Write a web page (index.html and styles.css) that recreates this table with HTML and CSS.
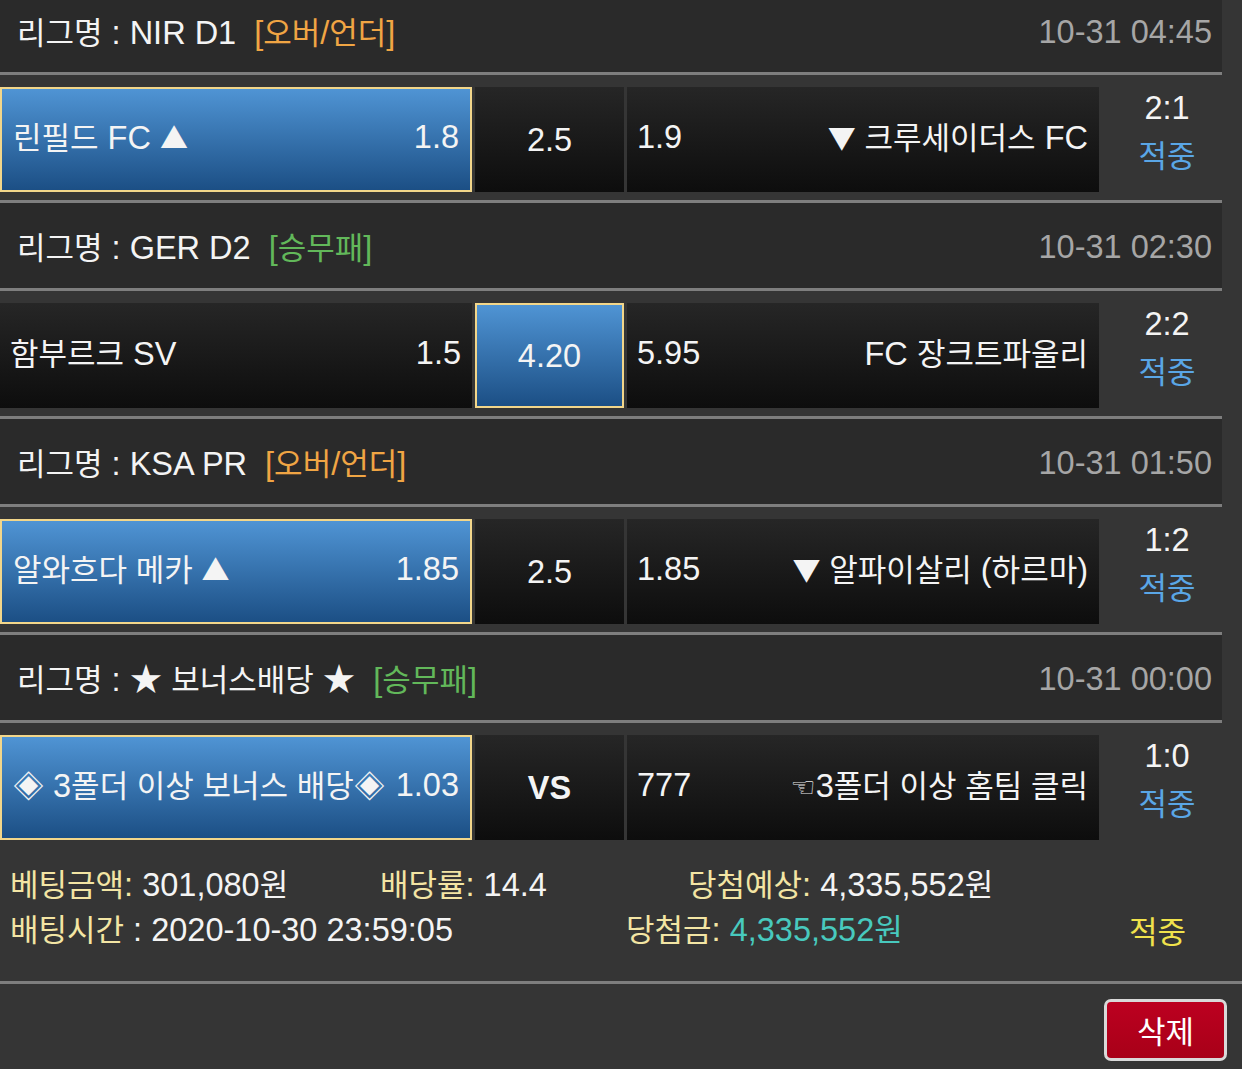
FILE: index.html
```html
<!DOCTYPE html>
<html lang="ko">
<head>
<meta charset="utf-8">
<title>배팅내역</title>
<link rel="stylesheet" href="styles.css">
</head>
<body>
<div class="board">
  <div class="head first">
    <div class="league"><span class="k">리그명</span> : NIR D1<span class="tag ou">[<span class="k">오버</span>/<span class="k">언더</span>]</span></div>
    <div class="time">10-31 04:45</div>
  </div>
  <div class="match">
    <div class="cell team sel"><span class="name"><span class="k">린필드</span> FC <span class="k tri">▲</span></span><span class="odd">1.8</span></div>
    <div class="cell draw">2.5</div>
    <div class="cell team"><span class="odd">1.9</span><span class="name"><span class="k"><span class="tri">▼</span> 크루세이더스</span> FC</span></div>
    <div class="score"><div>2:1</div><div class="hit k">적중</div></div>
  </div>

  <div class="head">
    <div class="league"><span class="k">리그명</span> : GER D2<span class="tag wdl">[<span class="k">승무패</span>]</span></div>
    <div class="time">10-31 02:30</div>
  </div>
  <div class="match">
    <div class="cell team"><span class="name"><span class="k">함부르크</span> SV</span><span class="odd">1.5</span></div>
    <div class="cell draw sel">4.20</div>
    <div class="cell team"><span class="odd">5.95</span><span class="name">FC <span class="k">장크트파울리</span></span></div>
    <div class="score"><div>2:2</div><div class="hit k">적중</div></div>
  </div>

  <div class="head">
    <div class="league"><span class="k">리그명</span> : KSA PR<span class="tag ou">[<span class="k">오버</span>/<span class="k">언더</span>]</span></div>
    <div class="time">10-31 01:50</div>
  </div>
  <div class="match">
    <div class="cell team sel"><span class="name"><span class="k">알와흐다 메카 <span class="tri">▲</span></span></span><span class="odd">1.85</span></div>
    <div class="cell draw">2.5</div>
    <div class="cell team"><span class="odd">1.85</span><span class="name"><span class="k"><span class="tri">▼</span> 알파이살리</span> (<span class="k">하르마</span>)</span></div>
    <div class="score"><div>1:2</div><div class="hit k">적중</div></div>
  </div>

  <div class="head">
    <div class="league"><span class="k">리그명</span> : ★ <span class="k">보너스배당</span> ★<span class="tag wdl">[<span class="k">승무패</span>]</span></div>
    <div class="time">10-31 00:00</div>
  </div>
  <div class="match">
    <div class="cell team sel"><span class="name"><span class="k">◈</span> 3<span class="k">폴더 이상 보너스 배당◈</span></span><span class="odd">1.03</span></div>
    <div class="cell draw vs">VS</div>
    <div class="cell team"><span class="odd">777</span><span class="name"><span class="hand">☜</span>3<span class="k">폴더 이상 홈팀 클릭</span></span></div>
    <div class="score"><div>1:0</div><div class="hit k">적중</div></div>
  </div>
</div>

<div class="summary">
  <div class="srow">
    <div class="item c1"><span class="lbl"><span class="k">베팅금액</span>:</span> 301,080<span class="k">원</span></div>
    <div class="item c2"><span class="lbl"><span class="k">배당률</span>:</span> 14.4</div>
    <div class="item"><span class="lbl"><span class="k">당첨예상</span>:</span> 4,335,552<span class="k">원</span></div>
  </div>
  <div class="srow">
    <div class="item c3"><span class="lbl"><span class="k">배팅시간</span></span> : 2020-10-30 23:59:05</div>
    <div class="item"><span class="lbl"><span class="k">당첨금</span>:</span> <span class="win">4,335,552<span class="k">원</span></span></div>
    <div class="item result k">적중</div>
  </div>
</div>

<div class="actions">
  <button class="del" type="button"><span class="k">삭제</span></button>
</div>
</body>
</html>
```

FILE: styles.css
```css
* { box-sizing: border-box; }

body {
  margin: 0;
  background: #353535;
  font-family: "Liberation Sans", "Noto Sans CJK KR", sans-serif;
  font-size: 32.5px;
  line-height: 1;
  color: #f4f4f4;
}

.k {
  font-family: "Noto Sans CJK KR", "Liberation Sans", sans-serif;
  font-size: 31px;
  line-height: 1;
}

.tri { font-size: 28px; }

.board {
  width: 1222px;
}

.head {
  height: 88px;
  border-top: 3px solid #7e7e7e;
  background: #2a2a2a;
  display: flex;
  align-items: center;
  justify-content: space-between;
  padding: 4px 10px 0 17px;
  white-space: nowrap;
}

.head.first {
  height: 72px;
  border-top: 0;
  padding: 0 10px 8px 17px;
}

.tag { margin-left: 18px; }
.tag.ou { color: #f0a544; }
.tag.wdl { color: #62b85a; }

.time { color: #a6a6a6; }

.match {
  height: 128px;
  border-top: 3px solid #7e7e7e;
  padding: 12px 0 8px;
  display: flex;
  align-items: flex-start;
  gap: 3px;
}

.cell {
  height: 105px;
  background: linear-gradient(#262626, #0d0d0d);
  display: flex;
  align-items: center;
  white-space: nowrap;
}

.cell.team {
  width: 472px;
  justify-content: space-between;
  padding: 0 11px 4px 10px;
}

.cell.draw {
  width: 149px;
  justify-content: center;
  padding-top: 2px;
}

.cell.sel {
  background: linear-gradient(#4f94d4, #1c4f85);
  border: 2px solid #f2d68a;
}

.cell.team.sel { padding: 0 11px 4px 11px; }

.vs { font-weight: bold; }

.hand {
  font-family: "DejaVu Sans", sans-serif;
  font-size: 28px;
  color: #e8e8e8;
}

.score {
  flex: 1;
  margin-top: -2px;
  padding-left: 10px;
  text-align: center;
  line-height: 46px;
}

.score .k { line-height: 46px; }

.hit { color: #5aa6e6; }

.summary {
  height: 136px;
  padding: 14px 0 0 10px;
  border-bottom: 3px solid #7e7e7e;
}

.srow {
  display: flex;
  height: 45px;
  align-items: center;
  white-space: nowrap;
}

.c1 { width: 370px; }
.c2 { width: 308px; }
.c3 { width: 616px; }

.lbl { color: #f3e5a4; }
.win { color: #48c9be; }

.result {
  margin-left: auto;
  margin-right: 56px;
  color: #f0e24c;
}

.actions {
  display: flex;
  justify-content: flex-end;
  padding: 15px 15px 0 0;
}

.del {
  width: 123px;
  height: 62px;
  background: linear-gradient(#bc0020, #a80018);
  border: 3px solid #d9d9d9;
  border-radius: 7px;
  color: #ffffff;
  font-family: "Noto Sans CJK KR", sans-serif;
  padding: 0;
}
```
